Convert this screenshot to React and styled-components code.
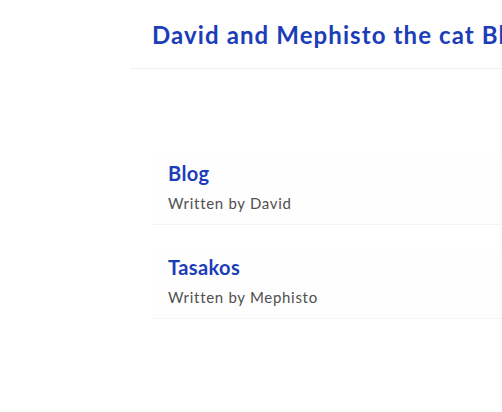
import styled, { createGlobalStyle } from "styled-components";

const GlobalStyle = createGlobalStyle`
  body {
    margin: 0;
    background: #ffffff;
    font-family: "Lato", "Noto Sans", sans-serif;
    overflow: hidden;
  }
`;

const posts = [
  { title: "Blog", author: "David" },
  { title: "Tasakos", author: "Mephisto" },
];

const App = () => {
  return (
    <Layout>
      <GlobalStyle />
      <Sidebar />
      <Main>
        {/* HEADER */}
        <Header>
          <SiteTitle>David and Mephisto the cat Blog</SiteTitle>
        </Header>

        {/* POSTS */}
        <PostList>
          {posts.map((post, index) => (
            <PostCard key={index}>
              <PostTitle>{post.title}</PostTitle>
              <PostMeta>Written by {post.author}</PostMeta>
            </PostCard>
          ))}
        </PostList>
      </Main>
    </Layout>
  );
};

const Layout = styled.div`
  display: flex;
  width: 100vw;
  height: 100vh;
  overflow: hidden;
`;

const Sidebar = styled.aside`
  flex: 0 0 130px;
`;

const Main = styled.main`
  flex: 1;
  min-width: 0;
`;

const Header = styled.header`
  height: 68px;
  display: flex;
  align-items: center;
  padding-left: 22px;
  border-bottom: 1px solid #f0f0f0;
  white-space: nowrap;
  overflow: hidden;
`;

const SiteTitle = styled.h1`
  margin: 0;
  font-size: 24px;
  font-weight: 700;
  color: #1b3db8;
  letter-spacing: 1.1px;
`;

const PostList = styled.div`
  display: flex;
  flex-direction: column;
  gap: 26px;
  padding: 88px 0 0 22px;
`;

const PostCard = styled.div`
  padding: 4px 16px 12px;
  background: #fefefe;
  border-bottom: 1px solid #f4f4f4;
`;

const PostTitle = styled.h2`
  margin: 0 0 9px;
  font-size: 20px;
  font-weight: 700;
  color: #1b3db8;
  letter-spacing: 0.4px;
`;

const PostMeta = styled.p`
  margin: 0;
  font-size: 15px;
  color: #505050;
  letter-spacing: 0.7px;
`;

export default App;
